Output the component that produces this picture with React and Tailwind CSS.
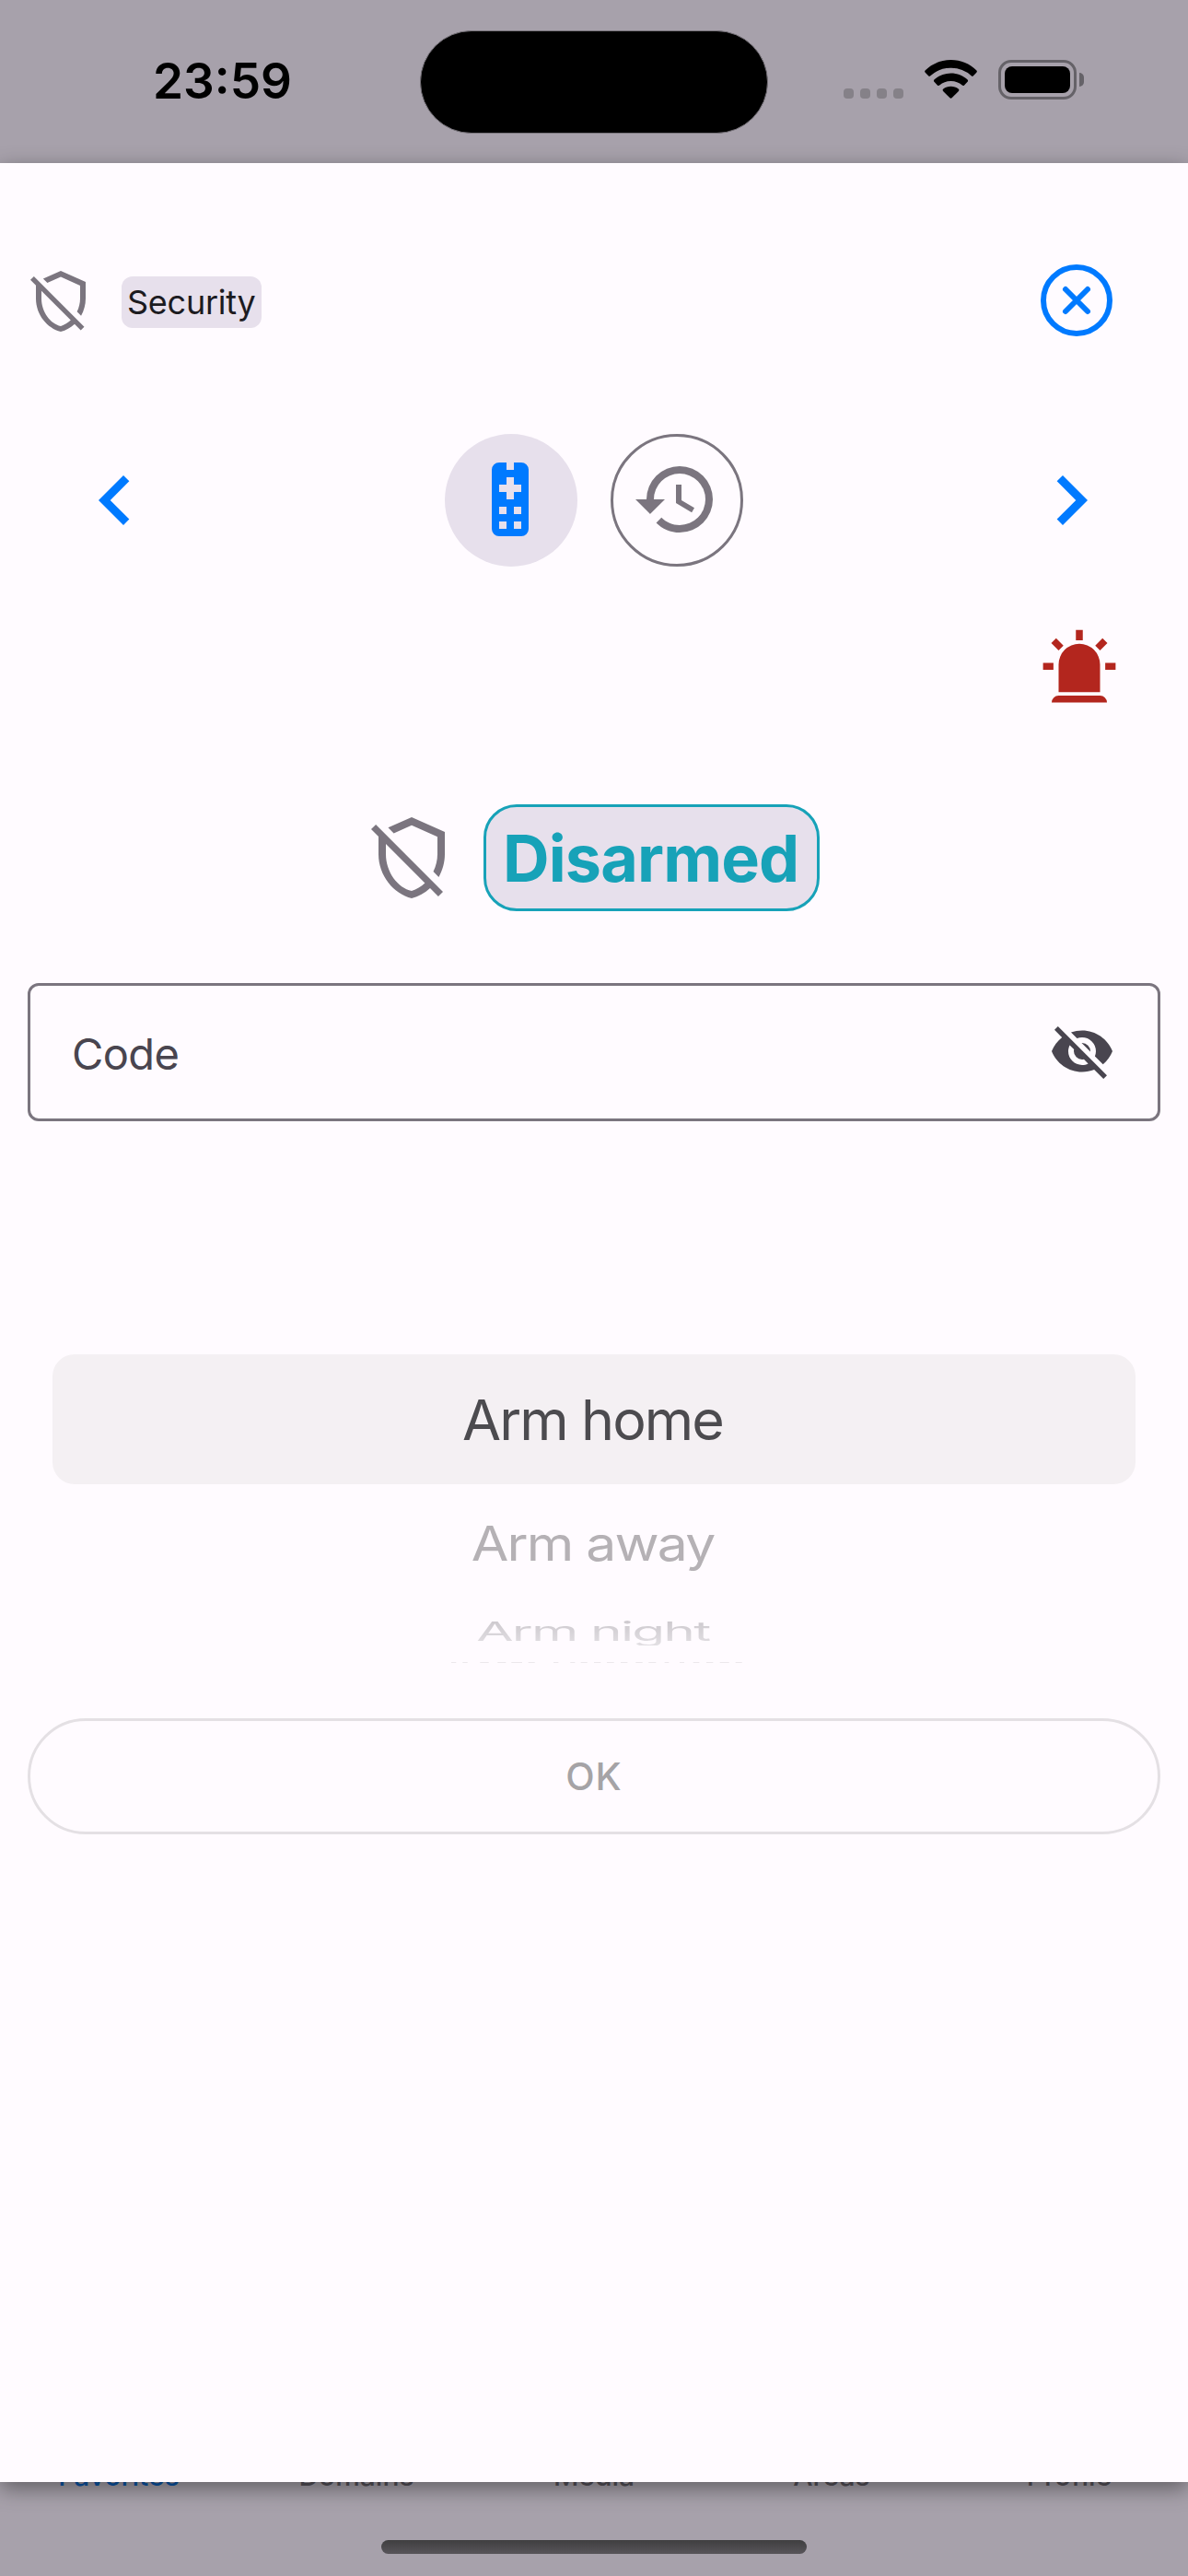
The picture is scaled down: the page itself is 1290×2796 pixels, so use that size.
const SHIELD_OFF =
  "M1,4.27L2.28,3L20.5,21.22L19.23,22.5L17,20.25C15.57,21.57 13.87,22.54 12,23C7.16,21.81 3,16.93 3,11V6.27L1,4.27M5,11C5,15.92 8.25,20.18 12,21C13.35,20.58 14.56,19.82 15.6,18.85L5,8.27V11M12,1L21,5V11C21,13.28 20.38,15.41 19.35,17.23L17.88,15.76C18.6,14.29 19,12.65 19,11V6.3L12,3.18L7.14,5.35L5.62,3.83L12,1Z";
const REMOTE =
  "M9,2H11V4H13V2H15A2,2 0 0,1 17,4V20A2,2 0 0,1 15,22H9A2,2 0 0,1 7,20V4A2,2 0 0,1 9,2M11,6V8H9V10H11V12H13V10H15V8H13V6H11M9,14V16H11V14H9M13,14V16H15V14H13M9,18V20H11V18H9M13,18V20H15V18H13Z";
const HISTORY =
  "M13,3A9,9 0 0,0 4,12H1L4.89,15.89L4.96,16.03L9,12H6A7,7 0 0,1 13,5A7,7 0 0,1 20,12A7,7 0 0,1 13,19C11.07,19 9.32,18.21 8.06,16.94L6.64,18.36C8.27,20 10.5,21 13,21A9,9 0 0,0 22,12A9,9 0 0,0 13,3M12,8V13L16.28,15.54L17,14.33L13.5,12.25V8H12Z";
const SIREN =
  "M6,6.9L3.87,4.78L5.28,3.37L7.4,5.5L6,6.9M13,1V4H11V1H13M20.13,4.78L18,6.9L16.6,5.5L18.72,3.37L20.13,4.78M4.5,10.5V12.5H1.5V10.5H4.5M19.5,10.5H22.5V12.5H19.5V10.5M6,20H18A2,2 0 0,1 20,22H4A2,2 0 0,1 6,20M12,5A6,6 0 0,1 18,11V19H6V11A6,6 0 0,1 12,5Z";
const EYE_OFF =
  "M11.83,9L15,12.16C15,12.11 15,12.05 15,12A3,3 0 0,0 12,9C11.94,9 11.89,9 11.83,9M7.53,9.8L9.08,11.35C9.03,11.56 9,11.77 9,12A3,3 0 0,0 12,15C12.22,15 12.44,14.97 12.65,14.92L14.2,16.47C13.53,16.8 12.79,17 12,17A5,5 0 0,1 7,12C7,11.21 7.2,10.47 7.53,9.8M2,4.27L4.28,6.55L4.73,7C3.08,8.3 1.78,10 1,12C2.73,16.39 7,19.5 12,19.5C13.55,19.5 15.03,19.2 16.38,18.66L16.81,19.08L19.73,22L21,20.73L3.27,3M12,7A5,5 0 0,1 17,12C17,12.64 16.87,13.26 16.64,13.82L19.57,16.75C21.07,15.5 22.27,13.86 23,12C21.27,7.61 17,4.5 12,4.5C10.6,4.5 9.26,4.75 8,5.2L10.17,7.35C10.74,7.13 11.35,7 12,7Z";
const CHEVRON_LEFT = "M15.41,16.58L10.83,12L15.41,7.41L14,6L8,12L14,18L15.41,16.58Z";
const CHEVRON_RIGHT = "M8.59,16.58L13.17,12L8.59,7.41L10,6L16,12L10,18L8.59,16.58Z";

function Icon({ d, className }) {
  return (
    <svg viewBox="0 0 24 24" fill="currentColor" className={`shrink-0 ${className}`}>
      <path d={d} fillRule="evenodd" />
    </svg>
  );
}

function StatusBar() {
  return (
    <header className="flex h-[177px] shrink-0 items-start">
      <div className="w-[456px] pt-14 pl-[166px] text-[53px] leading-[64px] font-semibold text-black">
        23:59
      </div>
      <div className="mt-[33px] h-[112px] w-[378px] rounded-full border border-[#77737a] bg-black" />
      <div className="mt-[64px] flex h-[44px] items-start pl-[82px]">
        <div className="mt-[32px] flex gap-[7px]">
          {[0, 1, 2, 3].map((i) => (
            <span key={i} className="h-[11px] w-[11px] rounded-[4px] bg-[#858188]" />
          ))}
        </div>
        <svg viewBox="0 0 57 42" className="mt-[1px] ml-[23px] h-[42px] w-[57px]">
          <path d="M28.5 0C39.5 0 49 4.3 56.2 11.2c.9.9.9 1.7.1 2.5l-3.4 3.6c-.7.7-1.5.7-2.2 0A32 32 0 0 0 28.5 8.8A32 32 0 0 0 6.3 17.3c-.7.7-1.5.7-2.2 0L.7 13.7c-.8-.8-.8-1.6.1-2.5C8 4.3 17.500 0 28.5 0Z" />
          <path d="M28.5 14.4c6.9 0 13.2 2.6 17.9 6.9.9.8.9 1.7.2 2.500l-3.500 3.700c-.8.8-1.500.7-2.300.1A18.200 18.200 0 0 0 28.500 23a18.200 18.200 0 0 0-12.300 4.600c-.8.6-1.500.7-2.300-.1l-3.500-3.700c-.7-.8-.7-1.700.2-2.500 4.700-4.300 11-6.900 17.900-6.900Z" />
          <path d="M28.5 28.8c3.1 0 6 1 8.200 2.800.8.7.9 1.500.2 2.300l-7.100 7.200c-.9.9-1.700.9-2.600 0l-7.100-7.200c-.7-.8-.6-1.600.2-2.300 2.200-1.800 5.100-2.800 8.200-2.800Z" />
        </svg>
        <div className="mt-[1px] ml-[23px] flex h-[43px] w-[85px] rounded-[14px] border-[3px] border-[#656268] p-[4px]">
          <div className="flex-1 rounded-[8px] bg-black" />
        </div>
        <div className="mt-[15px] ml-[3px] h-[15px] w-[5px] rounded-r-full bg-[#656268]" />
      </div>
    </header>
  );
}

function Header() {
  return (
    <div className="flex h-[78px] items-center pr-[82px] pl-[30px]">
      <Icon d={SHIELD_OFF} className="mt-[2px] h-[72px] w-[72px] text-[#7b757f]" />
      <div className="mt-1 ml-[30px] flex h-14 w-[152px] items-center rounded-[12px] bg-[#e7e0ec] pl-[6px] text-[36px] tracking-[-0.25px] text-[#1c1b1f]">
        Security
      </div>
      <svg
        viewBox="0 0 78 78"
        className="ml-auto h-[78px] w-[78px]"
        fill="none"
        stroke="#007aff"
        strokeWidth="6"
        strokeLinecap="round"
      >
        <circle cx="39" cy="39" r="36" />
        <path d="M27 27l24 24M51 27L27 51" />
      </svg>
    </div>
  );
}

function ViewSwitcher() {
  return (
    <div className="mt-[106px] flex h-36 items-center justify-between pr-[73px] pl-[71px]">
      <Icon d={CHEVRON_LEFT} className="mb-[1px] h-[108px] w-[108px] text-[#007aff]" />
      <div className="mr-[-2px] flex gap-9">
        <div className="flex h-36 w-36 items-center justify-center rounded-full bg-[#e7e0ec]">
          <Icon d={REMOTE} className="mr-[2px] mb-[2px] h-24 w-24 text-[#007aff]" />
        </div>
        <div className="flex h-36 w-36 items-center justify-center rounded-full border-[3px] border-[#7b757f]">
          <Icon d={HISTORY} className="mr-[2px] mb-[2px] h-24 w-24 text-[#7b757f]" />
        </div>
      </div>
      <Icon d={CHEVRON_RIGHT} className="mb-[1px] h-[108px] w-[108px] text-[#007aff]" />
    </div>
  );
}

/* Horizontal runs [start, end] of the nearly edge-on last wheel row, in thirds of a pixel. */
const EDGE_RUNS = [
  [0, 16], [37, 53], [94, 122], [151, 178], [196, 231], [251, 272], [333, 349],
  [388, 403], [422, 443], [465, 487], [507, 530], [552, 574], [601, 623],
  [643, 667], [695, 709], [744, 759], [788, 808], [831, 853], [875, 905], [926, 947],
];

function ModePicker() {
  return (
    <div className="mt-[253px] flex h-[395px] flex-col items-center px-[57px] text-[61px] leading-[64px] tracking-[-1.9px]">
      <div className="flex h-[141px] w-full shrink-0 items-center justify-center rounded-[24px] bg-[#f4f0f3] pr-[3px] text-[#4c4b4f]">
        Arm home
      </div>
      <div className="mt-8 mr-[2px] h-16 scale-x-[0.965] scale-y-[0.85] text-[#b5b1b5]">Arm away</div>
      <div className="mt-[32px] mr-[2px] h-16 scale-x-[0.96] scale-y-[0.473] bg-linear-to-b from-[#cbc7cc] to-[#e2dfe3] bg-clip-text text-transparent">
        Arm night
      </div>
      <svg viewBox="0 0 948 3" preserveAspectRatio="none" className="mt-[1px] mr-[-6px] h-[1px] w-[316px]">
        {EDGE_RUNS.map(([a, b]) => (
          <rect key={a} x={a} y="0" width={b - a} height="3" fill="#ebe7eb" />
        ))}
      </svg>
    </div>
  );
}

const TABS = ["Favorites", "Domains", "Media", "Areas", "Profile"];

export default function App() {
  return (
    <div className="flex h-[2796px] w-[1290px] flex-col overflow-hidden bg-[#a7a1ab] font-['Inter',sans-serif]">
      <StatusBar />
      <main className="relative z-10 h-[2517px] shrink-0 bg-[#fffbff] pt-[110px] shadow-[0_7px_22px_rgba(0,0,0,0.42)]">
        <Header />
        <ViewSwitcher />
        <div className="mt-[65px] flex justify-end pr-[73px]">
          <Icon d={SIREN} className="h-[90px] w-[90px] text-[#b3261e]" />
        </div>
        <div className="mt-[103px] flex h-[116px] items-center gap-[30px] pl-[399px]">
          <Icon d={SHIELD_OFF} className="h-24 w-24 text-[#7b757f]" />
          <div className="flex h-[116px] w-[365px] items-center rounded-[36px] border-[3px] border-[#17a2b8] bg-[#e7e0ec] pt-[2px] pl-[18px] text-[70px] leading-none font-bold tracking-[-0.85px] text-[#17a2b8]">
            Disarmed
          </div>
        </div>
        <div className="mx-[30px] mt-[78px] flex h-[150px] items-center justify-between rounded-[12px] border-[3px] border-[#7b757f] pr-[46px] pl-[45px]">
          <span className="mt-[3px] text-[47px] leading-none tracking-[-0.6px] text-[#49454f]">Code</span>
          <Icon d={EYE_OFF} className="mb-[2px] h-[72px] w-[72px] text-[#49454f]" />
        </div>
        <ModePicker />
        <div className="mx-[30px] flex h-[126px] items-center justify-center rounded-full border-[3px] border-[#e4e0e4] pt-[1px] text-[41px] font-medium tracking-[1px] text-[#a5a3a6]">
          OK
        </div>
      </main>
      <nav className="-mt-[25px] grid grid-cols-5 text-center text-[30px] leading-9 font-medium text-[#55515a]">
        {TABS.map((tab) => (
          <span key={tab} className="first:text-[#0a55a9]">
            {tab}
          </span>
        ))}
      </nav>
      <div className="mx-auto mt-[52px] h-[15px] w-[462px] rounded-full bg-linear-to-b from-[#3f3e40] to-[#58555a]" />
    </div>
  );
}
